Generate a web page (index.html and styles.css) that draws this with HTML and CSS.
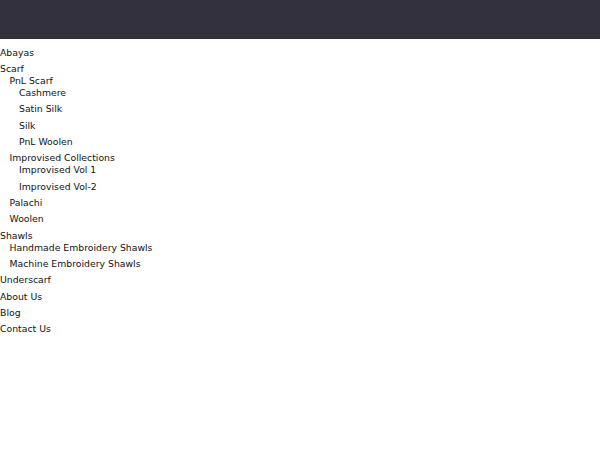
FILE: index.html
```html
<!DOCTYPE html>
<html lang="en">
<head>
    <meta charset="UTF-8">
    <meta name="viewport" content="width=device-width, initial-scale=1.0">
    <title>Menu</title>
    <link rel="stylesheet" href="styles.css">
</head>
<body>
    <header class="top-bar"></header>
    <nav class="menu">
        <ul>
            <li><a href="#">Abayas</a></li>
            <li><a href="#">Scarf</a>
                <ul>
                    <li><a href="#">PnL Scarf</a>
                        <ul>
                            <li><a href="#">Cashmere</a></li>
                            <li><a href="#">Satin Silk</a></li>
                            <li><a href="#">Silk</a></li>
                            <li><a href="#">PnL Woolen</a></li>
                        </ul>
                    </li>
                    <li><a href="#">Improvised Collections</a>
                        <ul>
                            <li><a href="#">Improvised Vol 1</a></li>
                            <li><a href="#">Improvised Vol-2</a></li>
                        </ul>
                    </li>
                    <li><a href="#">Palachi</a></li>
                    <li><a href="#">Woolen</a></li>
                </ul>
            </li>
            <li><a href="#">Shawls</a>
                <ul>
                    <li><a href="#">Handmade Embroidery Shawls</a></li>
                    <li><a href="#">Machine Embroidery Shawls</a></li>
                </ul>
            </li>
            <li><a href="#">Underscarf</a></li>
            <li><a href="#">About Us</a></li>
            <li><a href="#">Blog</a></li>
            <li><a href="#">Contact Us</a></li>
        </ul>
    </nav>
</body>
</html>
```

FILE: styles.css
```css
body {
    margin: 0;
    background: white;
    font-family: "DejaVu Sans", sans-serif;
    font-size: 9.3px;
    color: #111;
}
.top-bar {
    height: 39px;
    background: #33313e;
}
.menu {
    padding-top: 7.5px;
}
.menu ul {
    list-style: none;
    margin: 0;
    padding: 0;
}
.menu ul ul {
    padding-left: 9.5px;
}
.menu li {
    line-height: 12px;
}
.menu li + li {
    margin-top: 4.35px;
}
.menu a {
    color: #111;
    text-decoration: none;
}
```
